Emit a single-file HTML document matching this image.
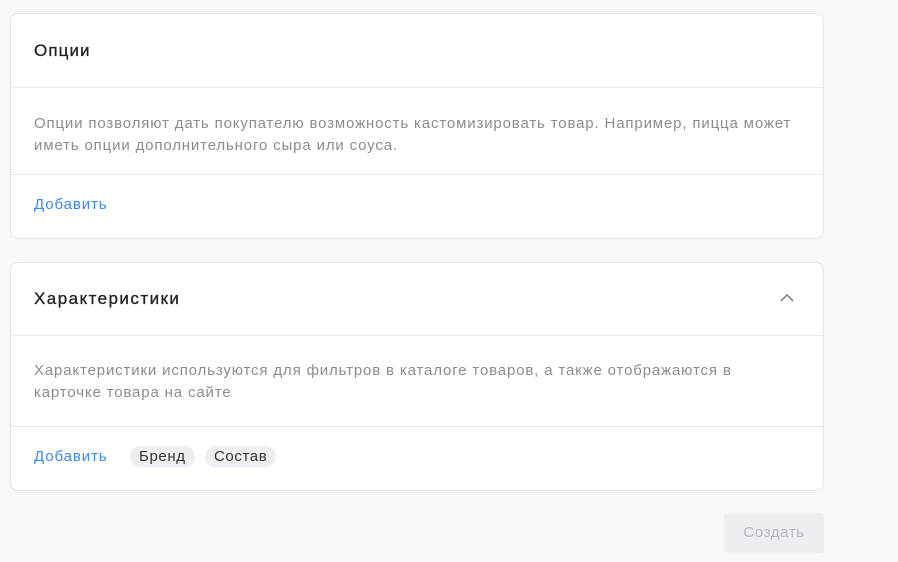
<!DOCTYPE html>
<html><head><meta charset="utf-8"><style>
body{margin:0;width:898px;height:562px;background:#f7f8fa;font-family:"Liberation Sans",sans-serif;position:relative;overflow:hidden}
.card{position:absolute;left:10px;width:814px;background:#fff;border:1px solid #e3e5ea;border-radius:8px;box-sizing:border-box}
.hl{position:absolute;left:0;right:0;height:1px;background:#e6e8ec}
.t{position:absolute;left:23px;font-size:17px;color:#222;letter-spacing:1.1px;-webkit-text-stroke:0.3px #222}
.d{position:absolute;left:23px;font-size:15px;color:#8a8c92;line-height:22px;width:790px;letter-spacing:0.85px;white-space:nowrap}
.a{position:absolute;left:23px;font-size:15px;color:#3b87f0;letter-spacing:0.9px}
.chip{position:absolute;height:21px;line-height:21px;background:#eceef1;border-radius:11px;font-size:15px;color:#333;padding:0 9px;letter-spacing:0.6px}
</style></head><body>
<div class="card" style="top:13px;height:226px">
<div class="t" style="top:27px">Опции</div>
<div class="hl" style="top:73px"></div>
<div class="d" style="top:99px">Опции позволяют дать покупателю возможность кастомизировать товар. Например, пицца может<br>иметь опции дополнительного сыра или соуса.</div>
<div class="hl" style="top:160px"></div>
<div class="a" style="top:182px">Добавить</div>
</div>
<div class="card" style="top:262px;height:229px">
<div class="t" style="top:26px;letter-spacing:1.45px">Характеристики</div>
<svg style="position:absolute;left:769px;top:30px" width="14" height="10" viewBox="0 0 14 10"><path d="M1 8L7 2L13 8" fill="none" stroke="#777" stroke-width="1.5"/></svg>
<div class="hl" style="top:72px"></div>
<div class="d" style="top:97px">Характеристики используются для фильтров в каталоге товаров, а также отображаются в<br>карточке товара на сайте</div>
<div class="hl" style="top:163px"></div>
<div class="a" style="top:185px">Добавить</div>
<div class="chip" style="left:119px;top:183px">Бренд</div>
<div class="chip" style="left:194px;top:183px">Состав</div>
</div>
<div style="position:absolute;left:724px;top:513px;width:100px;height:40px;background:#eceef1;border-radius:4px;color:#b4b7bd;font-size:15px;line-height:40px;text-align:center;letter-spacing:0.6px">Создать</div>
</body></html>
